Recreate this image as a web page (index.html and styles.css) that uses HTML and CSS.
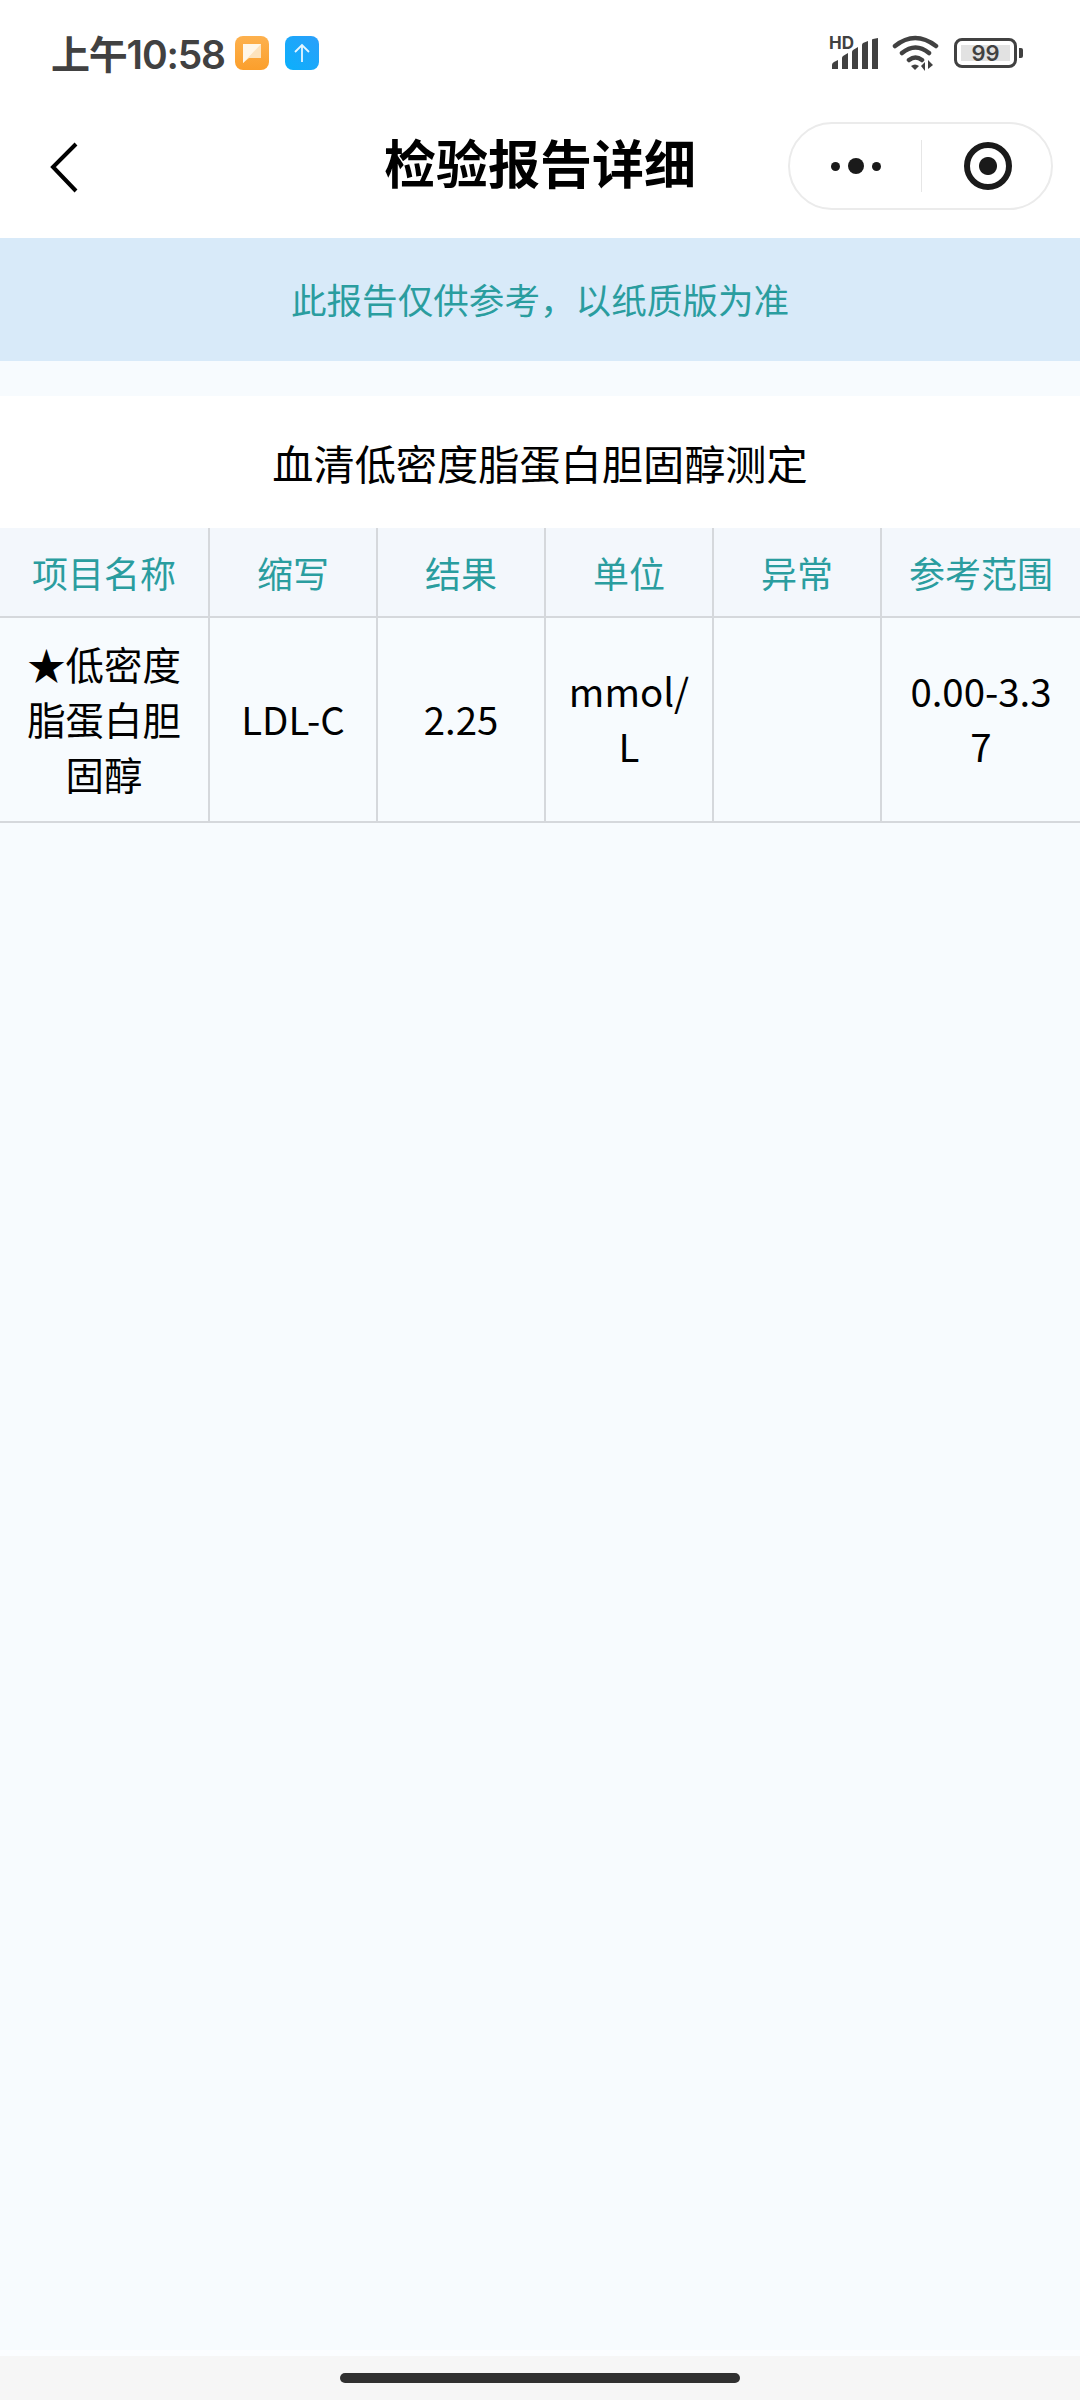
FILE: index.html
```html
<!DOCTYPE html>
<html lang="zh-CN">
<head>
    <meta charset="UTF-8">
    <meta name="viewport" content="width=device-width, initial-scale=1.0">
    <title>检验报告详细</title>
    <link rel="stylesheet" href="styles.css">
</head>
<body>
    <div class="status-bar">
        <div class="status-left">
            <span class="status-time">上午10:58</span>
            <svg class="app-icon" viewBox="0 0 34 34">
                <defs>
                    <linearGradient id="orange" x1="0" y1="0" x2="0" y2="1">
                        <stop offset="0" stop-color="#fdb14e"/>
                        <stop offset="1" stop-color="#fb9f2c"/>
                    </linearGradient>
                </defs>
                <rect width="34" height="34" rx="8" fill="url(#orange)"/>
                <path d="M8 8h18v14H14l-6 5z" fill="#fde3bd"/>
                <path d="M8 27V8h18z" fill="#fff6e8"/>
            </svg>
            <svg class="app-icon app-icon-blue" viewBox="0 0 34 34">
                <defs>
                    <linearGradient id="blue" x1="1" y1="0" x2="0" y2="1">
                        <stop offset="0" stop-color="#2b9ffa"/>
                        <stop offset="1" stop-color="#0bb0fb"/>
                    </linearGradient>
                </defs>
                <rect width="34" height="34" rx="8" fill="url(#blue)"/>
                <path d="M17 26V9M10 16l7-7 7 7" fill="none" stroke="#e6f6ff" stroke-width="1.8"/>
            </svg>
        </div>
        <div class="status-right">
            <div class="signal">
                <span class="signal-hd">HD</span>
                <svg class="signal-bars" viewBox="0 0 48 32">
                    <path d="M1 31v-4q0-2 2-3l4-2v9zM11 31V20q0-1 1-2l5-3v16zM21 31V14q0-1 1-2l5-3v22zM31 31V7q0-1 1-2l5-2v28zM41 31V2q0-1 1-1l5-1v31z" fill="#414141"/>
                </svg>
            </div>
            <svg class="wifi" viewBox="0 0 48 36">
                <path d="M3 11Q23-5 44 11M10 18q13.500-11 27 0M17 25q6.500-5 13 0" fill="none" stroke="#414141" stroke-width="4.500" stroke-linecap="round"/>
                <path d="M19 31q4-3 8 0l-4 4zM33 36v-9l-4 4zM36 25v9l5-4z" fill="#414141"/>
            </svg>
            <div class="battery">
                <div class="battery-body"><span class="battery-level">99</span></div>
                <div class="battery-nub"></div>
            </div>
        </div>
    </div>

    <div class="nav-bar">
        <svg class="nav-back" viewBox="0 0 30 52">
            <path d="M27 2L4 25l23 24" fill="none" stroke="#000" stroke-width="4"/>
        </svg>
        <h1 class="nav-title">检验报告详细</h1>
        <div class="capsule">
            <div class="capsule-more">
                <span class="dot"></span>
                <span class="dot dot-big"></span>
                <span class="dot"></span>
            </div>
            <div class="capsule-line"></div>
            <div class="capsule-close"><span class="close-ring"></span></div>
        </div>
    </div>

    <div class="notice">此报告仅供参考，以纸质版为准</div>

    <div class="content">
        <h2 class="report-title">血清低密度脂蛋白胆固醇测定</h2>
        <table class="report-table">
            <thead>
                <tr>
                    <th class="col-name">项目名称</th>
                    <th class="col-mid">缩写</th>
                    <th class="col-mid">结果</th>
                    <th class="col-mid">单位</th>
                    <th class="col-mid">异常</th>
                    <th>参考范围</th>
                </tr>
            </thead>
            <tbody>
                <tr>
                    <td>★低密度脂蛋白胆固醇</td>
                    <td>LDL-C</td>
                    <td>2.25</td>
                    <td>mmol/L</td>
                    <td></td>
                    <td>0.00-3.37</td>
                </tr>
            </tbody>
        </table>
    </div>

    <div class="home-area"><div class="home-bar"></div></div>
</body>
</html>
```

FILE: styles.css
```css
* {
    box-sizing: border-box;
}

html, body {
    margin: 0;
    height: 2400px;
}

body {
    display: flex;
    flex-direction: column;
    overflow: hidden;
    background: #fff;
    font-family: "Noto Sans CJK SC", "Noto Sans", sans-serif;
}

/* status bar */
.status-bar {
    height: 106px;
    padding: 0 57px 0 51px;
    display: flex;
    justify-content: space-between;
    align-items: center;
}

.status-left {
    display: flex;
    align-items: center;
}

.status-time {
    font-family: Inter, "Noto Sans CJK SC", sans-serif;
    font-size: 39px;
    font-weight: 600;
    letter-spacing: -1.2px;
    color: #414141;
    margin-bottom: 2px;
}

.app-icon {
    width: 34px;
    height: 34px;
    margin-left: 10px;
}

.app-icon-blue {
    margin-left: 16px;
}

.status-right {
    display: flex;
    align-items: center;
}

.signal {
    position: relative;
    width: 48px;
    height: 32px;
    margin-top: 2px;
}

.signal-hd {
    position: absolute;
    top: -4px;
    left: -2px;
    font-family: Inter, sans-serif;
    font-size: 17px;
    font-weight: 700;
    line-height: 18px;
    color: #414141;
}

.signal-bars {
    display: block;
    width: 48px;
    height: 32px;
}

.wifi {
    width: 48px;
    height: 36px;
    margin-left: 13px;
}

.battery {
    display: flex;
    align-items: center;
    margin-left: 14px;
}

.battery-body {
    width: 63px;
    height: 30px;
    padding: 4px;
    border: 3px solid #414141;
    border-radius: 8px;
}

.battery-level {
    display: block;
    width: 100%;
    height: 100%;
    background: #e2e2e2;
    font-family: Inter, sans-serif;
    font-size: 22px;
    font-weight: 600;
    line-height: 16px;
    text-align: center;
    color: #414141;
}

.battery-nub {
    width: 4px;
    height: 10px;
    margin-left: 2px;
    border-radius: 0 2px 2px 0;
    background: #414141;
}

/* nav */
.nav-bar {
    height: 132px;
    padding-bottom: 12px;
    display: grid;
    grid-template-columns: 1fr auto 1fr;
    align-items: center;
}

.nav-back {
    width: 30px;
    height: 52px;
    margin: 3px 0 0 49px;
}

.nav-title {
    margin: 0 0 10px;
    font-size: 52px;
    font-weight: 700;
    color: #000;
}

.capsule {
    justify-self: end;
    width: 265px;
    height: 88px;
    margin-right: 27px;
    display: flex;
    align-items: center;
    border: 2px solid #ebebeb;
    border-radius: 44px;
}

.capsule-more {
    width: 131px;
    display: flex;
    justify-content: center;
    align-items: center;
    gap: 8px;
}

.dot {
    width: 9px;
    height: 9px;
    border-radius: 50%;
    background: #1a1a1a;
}

.dot-big {
    width: 16px;
    height: 16px;
}

.capsule-line {
    width: 1px;
    height: 52px;
    background: #e6e6e6;
}

.capsule-close {
    flex: 1;
    display: flex;
    justify-content: center;
    padding-left: 3px;
}

.close-ring {
    width: 48px;
    height: 48px;
    border: 6px solid #1a1a1a;
    border-radius: 50%;
    background: radial-gradient(circle, #1a1a1a 8.500px, #fff 9.500px);
}

/* notice */
.notice {
    height: 123px;
    background: #d8eaf9;
    font-size: 35.600px;
    line-height: 121px;
    text-align: center;
    color: #2a9d9f;
}

/* report */
.content {
    flex: 1;
    padding-top: 35px;
    background: #f7fbfe;
}

.report-title {
    margin: 0;
    height: 132px;
    background: #fff;
    font-size: 41.200px;
    font-weight: 400;
    line-height: 132px;
    text-align: center;
    color: #000;
}

.report-table {
    width: 1080px;
    table-layout: fixed;
    border-collapse: collapse;
    color: #000;
}

.col-name {
    width: 209px;
}

.col-mid {
    width: 168px;
}

.report-table th {
    height: 89px;
    padding: 0;
    background: #f3f7fc;
    border-right: 2px solid #d5d8dc;
    border-bottom: 2px solid #d5d8dc;
    font-size: 36px;
    font-weight: 400;
    color: #2a9d9f;
}

.report-table td {
    height: 205px;
    padding: 0 20px 3px;
    background: #f7fbfe;
    border-right: 2px solid #d5d8dc;
    border-bottom: 2px solid #d5d8dc;
    font-size: 38.400px;
    line-height: 55px;
    text-align: center;
    word-break: break-all;
}

.report-table th:last-child,
.report-table td:last-child {
    border-right: 0;
}

/* home indicator */
.home-area {
    height: 50px;
    padding-top: 17px;
    border-top: 6px solid #fbfdff;
    background: #f6f6f6;
}

.home-bar {
    width: 400px;
    height: 10px;
    margin: 0 auto;
    border-radius: 5px;
    background: #303030;
}
```
